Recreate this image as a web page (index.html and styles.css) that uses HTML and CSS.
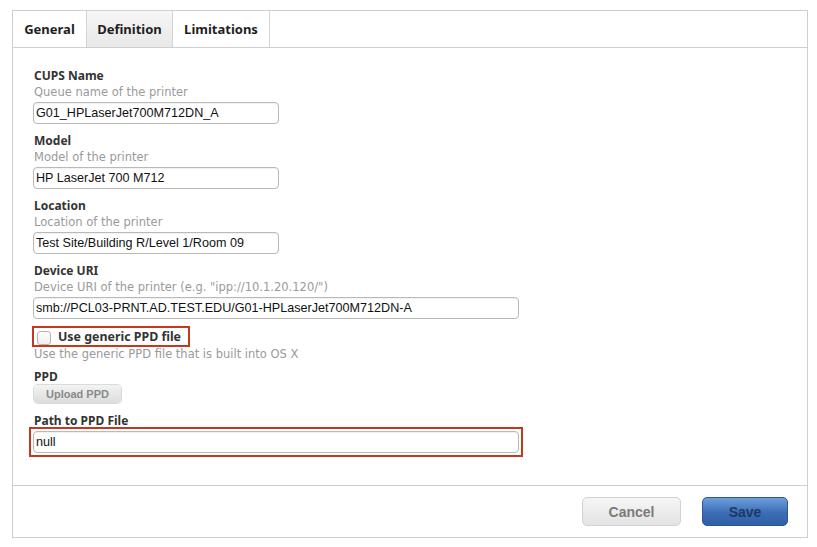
FILE: index.html
```html
<!DOCTYPE html>
<html>
<head>
<meta charset="utf-8">
<link rel="stylesheet" href="styles.css">
</head>
<body>
<div class="panel">
  <div class="tabs">
    <div class="tab tab-general">General</div>
    <div class="tab tab-def">Definition</div>
    <div class="tab tab-lim">Limitations</div>
  </div>
  <div class="content">
    <div class="group">
      <div class="label">CUPS Name</div>
      <div class="hint">Queue name of the printer</div>
      <div class="input short">G01_HPLaserJet700M712DN_A</div>
    </div>
    <div class="group">
      <div class="label">Model</div>
      <div class="hint">Model of the printer</div>
      <div class="input short">HP LaserJet 700 M712</div>
    </div>
    <div class="group">
      <div class="label">Location</div>
      <div class="hint">Location of the printer</div>
      <div class="input short">Test Site/Building R/Level 1/Room 09</div>
    </div>
    <div class="group">
      <div class="label">Device URI</div>
      <div class="hint">Device URI of the printer (e.g. "ipp://10.1.20.120/")</div>
      <div class="input long">smb://PCL03-PRNT.AD.TEST.EDU/G01-HPLaserJet700M712DN-A</div>
    </div>
    <div class="check-group">
      <div class="check-row">
        <span class="checkbox"></span>
        <span class="label">Use generic PPD file</span>
      </div>
      <div class="hint">Use the generic PPD file that is built into OS X</div>
    </div>
    <div class="ppd">
      <div class="label">PPD</div>
      <div class="upload">Upload PPD</div>
    </div>
    <div class="path">
      <div class="label">Path to PPD File</div>
      <div class="highlight-box">
        <div class="input long">null</div>
      </div>
    </div>
  </div>
  <div class="footer">
    <div class="btn cancel">Cancel</div>
    <div class="btn save">Save</div>
  </div>
</div>
</body>
</html>
```
FILE: styles.css
```css
html, body {
  margin: 0;
  padding: 0;
  background: #fff;
}
body {
  font-family: "DejaVu Sans", "Noto Sans", sans-serif;
  color: #333;
}
.panel {
  margin: 10px 0 0 12px;
  width: 794px;
  height: 526px;
  border: 1px solid #cfcfcf;
  display: flex;
  flex-direction: column;
}
.tabs {
  display: flex;
  height: 36px;
  border-bottom: 1px solid #cfcfcf;
}
.tab {
  display: flex;
  align-items: center;
  justify-content: center;
  box-sizing: border-box;
  font-family: "Noto Sans", "DejaVu Sans", sans-serif;
  font-weight: bold;
  font-size: 13px;
  color: #1e1e1e;
  border-right: 1px solid #d4d4d4;
}
.tab-general { width: 74px; }
.tab-def {
  width: 86px;
  background: linear-gradient(#f6f6f6, #e8e8e8);
}
.tab-lim { width: 97px; }
.content {
  flex: 1;
  padding: 20px 0 0 20px;
  border-bottom: 1px solid #cfcfcf;
}
.group {
  margin-bottom: 9px;
}
.label {
  font-family: "Noto Sans", "DejaVu Sans", sans-serif;
  font-weight: bold;
  font-size: 12px;
  line-height: 16px;
  color: #333;
  padding-left: 1px;
}
.hint {
  font-size: 11.5px;
  line-height: 16px;
  color: #9a9a9a;
  padding-left: 1px;
}
.input {
  margin-top: 2px;
  height: 20px;
  border: 1px solid #b9b9b9;
  border-radius: 4px;
  font-family: "Liberation Sans", Arial, sans-serif;
  font-size: 12.6px;
  line-height: 20px;
  padding: 0 2px;
  color: #111;
  white-space: nowrap;
  box-shadow: inset 0 1px 1px rgba(0,0,0,0.06);
}
.short { width: 240px; }
.long { width: 480px; }
.check-group {
  margin-top: -2px;
}
.check-row {
  display: flex;
  width: fit-content;
  align-items: center;
  gap: 7px;
  border: 2px solid #c3391f;
  height: 17px;
  padding: 0 7px 0 3px;
  margin-left: -1px;
  margin-bottom: -1px;
  white-space: nowrap;
}
.check-row .label {
  padding-left: 0;
  font-size: 12.4px;
}
.checkbox {
  width: 12px;
  height: 12px;
  border: 1px solid #b5b5b5;
  border-radius: 3px;
  background: linear-gradient(#fff, #efefef);
  margin-top: 3px;
}
.ppd {
  margin-top: 7px;
  margin-bottom: 10px;
}
.upload {
  margin-left: 1px;
  width: 87px;
  height: 18px;
  line-height: 18px;
  text-align: center;
  font-family: "Liberation Sans", Arial, sans-serif;
  font-weight: bold;
  font-size: 11px;
  color: #8a8a8a;
  border-radius: 4px;
  background: linear-gradient(#f3f3f3, #dcdcdc);
  box-shadow: 0 0 0 1px #dadada;
}
.path .label {
  margin-bottom: -2px;
}
.highlight-box {
  width: fit-content;
  border: 2px solid #c3391f;
  padding: 2px;
  margin-left: -4px;
}
.highlight-box .input {
  margin: 0;
}
.footer {
  height: 51px;
  display: flex;
  justify-content: flex-end;
  align-items: flex-start;
  padding: 11px 19px 0 0;
  box-sizing: border-box;
  gap: 21px;
}
.btn {
  height: 29px;
  border-radius: 5px;
  display: flex;
  align-items: center;
  justify-content: center;
  font-family: "Liberation Sans", Arial, sans-serif;
  font-weight: bold;
  font-size: 14px;
  box-sizing: border-box;
}
.cancel {
  width: 99px;
  color: #7a7a7a;
  border: 1px solid #d2d2d2;
  background: linear-gradient(#f6f6f6, #e3e3e3);
}
.save {
  width: 86px;
  color: #1c3966;
  border: 1px solid #2d5597;
  background: linear-gradient(#6d9fdc, #3b6db5 55%, #2f5fa6);
}
```
